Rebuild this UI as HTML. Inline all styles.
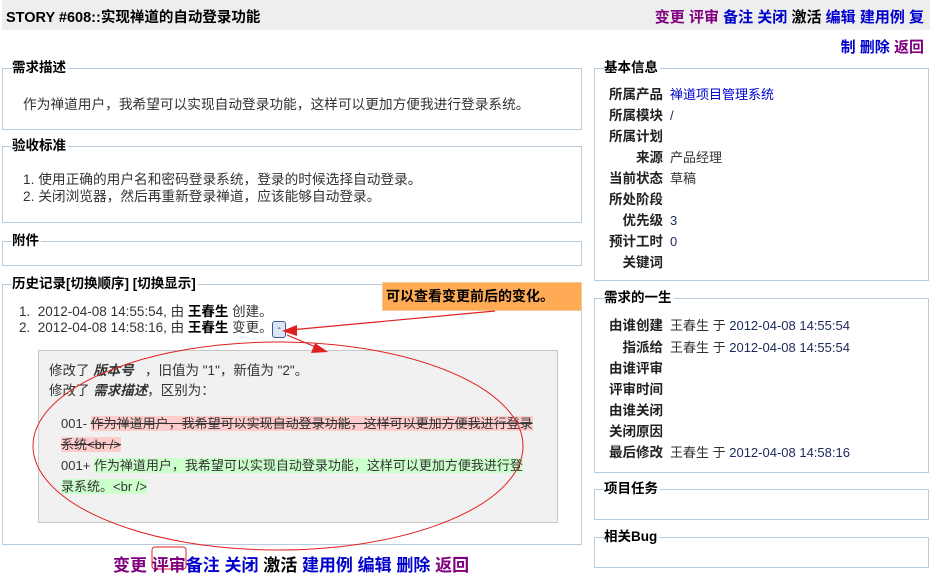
<!DOCTYPE html>
<html><head><meta charset="utf-8"><style>
*{margin:0;padding:0;box-sizing:border-box}
body{width:930px;height:570px;overflow:hidden;background:#fff;font-family:"Liberation Sans","Noto Sans CJK SC",sans-serif;font-size:12px;color:#333;position:relative}
.a{position:absolute;white-space:nowrap}
.box{position:absolute;border:1px solid #b8cce0}
.lg{position:absolute;top:-9px;left:9px;background:#fff;font-weight:bold;font-size:13.5px;color:#000;padding-right:2px;line-height:16px}
.b{font-weight:bold;color:#000}
.p{color:#800080}.bl{color:#0000cc}
.lab{position:absolute;width:68px;text-align:right;font-weight:bold;color:#222;font-size:13.5px;line-height:16px}
.val{position:absolute;left:75px;font-size:13px;line-height:16px}
.n{color:#1a2a5a}
</style></head><body>
<div class="a" style="left:2px;top:0;width:928px;height:30px;background:#eee"></div>
<div class="a b" style="left:6px;top:6px;font-size:14.5px">STORY #608::实现禅道的自动登录功能</div>
<div class="a b" style="right:6px;top:6px;font-size:15px"><span class="p">变更 评审</span> <span class="bl">备注 关闭</span> <span style="color:#000">激活</span> <span class="bl">编辑 建用例 复</span></div>
<div class="a b" style="right:6px;top:36px;font-size:15px"><span class="bl">制 删除</span> <span class="p">返回</span></div>

<div class="box" style="left:2px;top:68px;width:580px;height:62px"><span class="lg">需求描述</span>
<div class="a" style="left:20px;top:24px;font-size:13.7px">作为禅道用户，我希望可以实现自动登录功能，这样可以更加方便我进行登录系统。</div></div>

<div class="box" style="left:2px;top:146px;width:580px;height:77px"><span class="lg">验收标准</span>
<div class="a" style="left:20px;top:24px;font-size:13.7px;line-height:17px">1. 使用正确的用户名和密码登录系统，登录的时候选择自动登录。<br>2. 关闭浏览器，然后再重新登录禅道，应该能够自动登录。</div></div>

<div class="box" style="left:2px;top:241px;width:580px;height:25px"><span class="lg">附件</span></div>

<div class="box" style="left:2px;top:284px;width:580px;height:261px"><span class="lg">历史记录[切换顺序] [切换显示]</span>
<div class="a" style="left:16px;top:19px;font-size:13.5px;line-height:16px">1.&nbsp; 2012-04-08 14:55:54, 由 <b style="color:#000">王春生</b> 创建。<br>2.&nbsp; 2012-04-08 14:58:16, 由 <b style="color:#000">王春生</b> 变更。</div>
<div class="a" style="left:269px;top:36px;width:14px;height:17px;border:1px solid #3a5a9a;border-radius:3px;background:#dde6f5;font-size:10px;text-align:center;line-height:14px">-</div>
</div>

<div class="a" style="left:38px;top:350px;width:520px;height:173px;background:#f1f1f1;border:1px solid #c8c8c8"></div>
<div class="a" style="left:49px;top:361px;font-size:13.5px;line-height:20px">修改了 <b><i>版本号</i></b> &nbsp;&nbsp;，旧值为 "1"，新值为 "2"。<br>修改了 <b><i>需求描述</i></b>，区别为：</div>
<div class="a" style="left:61px;top:413px;font-size:13px;line-height:21px">001- <span style="background:#fcc;text-decoration:line-through">作为禅道用户，我希望可以实现自动登录功能，这样可以更加方便我进行登录</span><br><span style="background:#fcc;text-decoration:line-through">系统&lt;br /&gt;</span><br>001+ <span style="background:#cfc">作为禅道用户，我希望可以实现自动登录功能，这样可以更加方便我进行登</span><br><span style="background:#cfc">录系统。&lt;br /&gt;</span></div>

<div class="a" style="left:382px;top:282px;width:200px;height:29px;background:#ffaa55;border:1px solid #eecc99"></div>
<div class="a b" style="left:386px;top:286px;font-size:14px">可以查看变更前后的变化。</div>

<svg class="a" style="left:0;top:0" width="930" height="570">
<ellipse cx="278" cy="446" rx="245" ry="104" fill="none" stroke="#e02020" stroke-width="1"/>
<line x1="495" y1="311" x2="290" y2="330" stroke="#e02020" stroke-width="1.2"/>
<polygon points="282,331 297,325 297,336" fill="#e02020"/>
<line x1="287" y1="335" x2="318" y2="348" stroke="#e02020" stroke-width="1.2"/>
<polygon points="328,352 311,353 315,343" fill="#e02020"/>
<rect x="152" y="547" width="34" height="22" rx="3" fill="none" stroke="#e02020"/>
</svg>

<div class="a b" style="left:113px;top:551px;font-size:17px"><span class="p">变更 评审</span><span class="bl">备注 关闭</span> <span style="color:#000">激活</span> <span class="bl">建用例 编辑 删除</span> <span class="p">返回</span></div>

<div class="box" style="left:594px;top:68px;width:335px;height:213px"><span class="lg">基本信息</span>
<div class="lab" style="left:0;top:18px">所属产品</div><div class="val bl" style="top:18px">禅道项目管理系统</div>
<div class="lab" style="left:0;top:39px">所属模块</div><div class="val n" style="top:39px">/</div>
<div class="lab" style="left:0;top:60px">所属计划</div>
<div class="lab" style="left:0;top:81px">来源</div><div class="val" style="top:81px">产品经理</div>
<div class="lab" style="left:0;top:102px">当前状态</div><div class="val" style="top:102px">草稿</div>
<div class="lab" style="left:0;top:123px">所处阶段</div>
<div class="lab" style="left:0;top:144px">优先级</div><div class="val n" style="top:144px">3</div>
<div class="lab" style="left:0;top:165px">预计工时</div><div class="val n" style="top:165px">0</div>
<div class="lab" style="left:0;top:186px">关键词</div>
</div>

<div class="box" style="left:594px;top:298px;width:335px;height:175px"><span class="lg">需求的一生</span>
<div class="lab" style="left:0;top:19px">由谁创建</div><div class="val" style="top:19px">王春生 于 <span class="n">2012-04-08 14:55:54</span></div>
<div class="lab" style="left:0;top:41px">指派给</div><div class="val" style="top:41px">王春生 于 <span class="n">2012-04-08 14:55:54</span></div>
<div class="lab" style="left:0;top:62px">由谁评审</div>
<div class="lab" style="left:0;top:83px">评审时间</div>
<div class="lab" style="left:0;top:104px">由谁关闭</div>
<div class="lab" style="left:0;top:125px">关闭原因</div>
<div class="lab" style="left:0;top:146px">最后修改</div><div class="val" style="top:146px">王春生 于 <span class="n">2012-04-08 14:58:16</span></div>
</div>

<div class="box" style="left:594px;top:489px;width:335px;height:31px"><span class="lg">项目任务</span></div>
<div class="box" style="left:594px;top:537px;width:335px;height:31px"><span class="lg">相关Bug</span></div>
</body></html>
